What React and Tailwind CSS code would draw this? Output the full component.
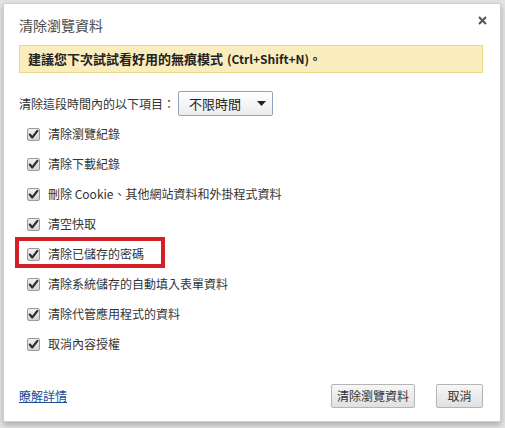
import { useState } from 'react';

const font = { fontFamily: '"Noto Sans CJK TC", "Noto Sans", sans-serif' };

const items = [
  '清除瀏覽紀錄',
  '清除下載紀錄',
  '刪除 Cookie、其他網站資料和外掛程式資料',
  '清空快取',
  '清除已儲存的密碼',
  '清除系統儲存的自動填入表單資料',
  '清除代管應用程式的資料',
  '取消內容授權',
];

const CheckBox = ({ checked, onClick }) => (
  <span
    onClick={onClick}
    className="w-[13px] h-[13px] border border-[#9a9a9a] rounded-[2px] bg-gradient-to-b from-[#f0f0f0] to-[#d2d2d2] flex items-center justify-center shrink-0"
  >
    {checked && (
      <svg width="11" height="11" viewBox="0 0 11 11">
        <path d="M1.8 5.6 L4.3 8.4 L9.4 1.8" fill="none" stroke="#2b2b2b" strokeWidth="2.2" strokeLinecap="round" strokeLinejoin="round" />
      </svg>
    )}
  </span>
);

export default function App() {
  const [checked, setChecked] = useState(items.map(() => true));

  const toggle = (i) => {
    const next = [...checked];
    next[i] = !next[i];
    setChecked(next);
  };

  return (
    <div className="w-[505px] h-[428px] bg-[#e4e4e4] pt-[3px] pl-[3px] overflow-hidden" style={font}>
      <div className="relative w-[498px] h-[419px] bg-white border border-[#cfcfcf] rounded-[2px] shadow-[0_3px_6px_rgba(0,0,0,0.25)] flex flex-col pl-[15px] pr-[17px] pt-[10px] text-[#333] text-[12px]">
        <button className="absolute right-[10px] top-[8px] w-[16px] h-[16px] flex items-center justify-center">
          <svg width="9" height="9" viewBox="0 0 9 9">
            <path d="M1 1 L8 8 M8 1 L1 8" stroke="#555" strokeWidth="2" />
          </svg>
        </button>

        <div className="h-[22px] flex items-center text-[14px] text-[#4a4a4a]">清除瀏覽資料</div>

        <div className="mt-[9px] h-[28px] bg-[#f9edbe] border border-[#ecd98c] flex items-center pl-[8px] text-[13px] font-bold text-[#222]">
          建議您下次試試看好用的無痕模式 <span className="ml-[4px] text-[12px]">(Ctrl+Shift+N)。</span>
        </div>

        <div className="mt-[18px] flex items-center">
          <span className="w-[159px]">清除這段時間內的以下項目：</span>
          <div className="w-[95px] h-[25px] border border-[#8da4c4] rounded-[2px] bg-gradient-to-b from-white to-[#ececec] flex items-center pl-[10px] pr-[6px] text-[13px] text-[#222]">
            <span className="flex-1">不限時間</span>
            <svg width="9" height="5" viewBox="0 0 9 5">
              <path d="M0 0 H9 L4.5 5 Z" fill="#222" />
            </svg>
          </div>
        </div>

        <div className="mt-[3px] flex flex-col pl-[8px]">
          {items.map((label, i) => (
            <label key={label} className="h-[30px] flex items-center gap-[8px] text-[12px]">
              <CheckBox checked={checked[i]} onClick={() => toggle(i)} />
              <span>{label}</span>
            </label>
          ))}
        </div>

        <div className="mt-[25px] flex items-center">
          <a href="#" className="flex-1 text-[12px] text-[#1b4d8f] underline">瞭解詳情</a>
          <button className="w-[84px] h-[24px] border border-[#b5b5b5] rounded-[2px] bg-gradient-to-b from-[#f7f7f7] to-[#e0e0e0] text-[12px] text-[#333]">
            清除瀏覽資料
          </button>
          <button className="ml-[21px] w-[47px] h-[24px] border border-[#b5b5b5] rounded-[2px] bg-gradient-to-b from-[#f7f7f7] to-[#e0e0e0] text-[12px] text-[#333]">
            取消
          </button>
        </div>

        <div className="absolute left-[11px] top-[233px] w-[150px] h-[31px] border-4 border-[#d41f27] pointer-events-none" />
      </div>
    </div>
  );
}
